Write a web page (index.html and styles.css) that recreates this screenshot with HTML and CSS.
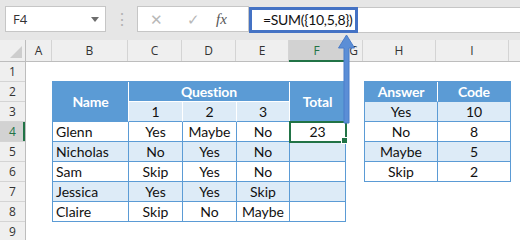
FILE: index.html
```html
<!DOCTYPE html>
<html lang="en">
<head>
    <meta charset="UTF-8">
    <title>SUM array constant</title>
    <link rel="stylesheet" href="styles.css">
</head>
<body>
    <div class="app">
        <div class="toolbar">
            <div class="namebox">F4<span class="caret"></span></div>
            <div class="grip">&#8942;</div>
            <div class="fx-buttons">
                <span class="btn">&#10005;</span>
                <span class="btn">&#10003;</span>
                <span class="fx">fx</span>
            </div>
            <div class="formula">
                <div class="formula-text">=SUM({10,5,8})</div>
            </div>
        </div>

        <div class="sheet">
            <div class="corner"><span class="tri"></span></div>
            <div class="col-heads">
                <div class="ch w-a">A</div>
                <div class="ch w-b">B</div>
                <div class="ch w-c">C</div>
                <div class="ch w-d">D</div>
                <div class="ch w-e">E</div>
                <div class="ch w-f sel">F</div>
                <div class="ch w-g">G</div>
                <div class="ch w-h">H</div>
                <div class="ch w-i">I</div>
                <div class="ch rest"></div>
            </div>
            <div class="row-heads">
                <div class="rh">1</div>
                <div class="rh">2</div>
                <div class="rh">3</div>
                <div class="rh sel">4</div>
                <div class="rh">5</div>
                <div class="rh">6</div>
                <div class="rh">7</div>
                <div class="rh">8</div>
                <div class="rh">9</div>
            </div>
            <div class="cells">
                <table class="tbl survey">
                    <colgroup>
                        <col class="w-b"><col class="w-c"><col class="w-d"><col class="w-e"><col class="w-f">
                    </colgroup>
                    <tr>
                        <td class="hd name-hd" rowspan="2">Name</td>
                        <td class="hd q-hd" colspan="3">Question</td>
                        <td class="hd total-hd" rowspan="2">Total</td>
                    </tr>
                    <tr class="sub">
                        <td>1</td><td>2</td><td>3</td>
                    </tr>
                    <tr>
                        <td class="nm">Glenn</td><td>Yes</td><td>Maybe</td><td>No</td><td class="active">23</td>
                    </tr>
                    <tr class="band">
                        <td class="nm">Nicholas</td><td>No</td><td>Yes</td><td>No</td><td></td>
                    </tr>
                    <tr>
                        <td class="nm">Sam</td><td>Skip</td><td>Yes</td><td>No</td><td></td>
                    </tr>
                    <tr class="band">
                        <td class="nm">Jessica</td><td>Yes</td><td>Yes</td><td>Skip</td><td></td>
                    </tr>
                    <tr>
                        <td class="nm">Claire</td><td>Skip</td><td>No</td><td>Maybe</td><td></td>
                    </tr>
                </table>

                <table class="tbl codes">
                    <colgroup>
                        <col class="w-h"><col class="w-i">
                    </colgroup>
                    <tr>
                        <td class="hd">Answer</td><td class="hd last">Code</td>
                    </tr>
                    <tr class="band"><td>Yes</td><td>10</td></tr>
                    <tr><td>No</td><td>8</td></tr>
                    <tr class="band"><td>Maybe</td><td>5</td></tr>
                    <tr><td>Skip</td><td>2</td></tr>
                </table>
            </div>
        </div>

        <svg class="arrow" width="18" height="92" viewBox="0 0 18 92">
            <path d="M8.5 0 L16.5 13 L11 13 L11 88 L6 88 L6 13 L0.5 13 Z" fill="#5b8ed6" stroke="#4a7cc9" stroke-width="1"/>
        </svg>
    </div>
</body>
</html>
```

FILE: styles.css
```css
body {
    margin: 0;
    background-color: #ffffff;
}
.app {
    position: relative;
    width: 520px;
    height: 240px;
    overflow: hidden;
    font-family: 'Lato', 'Liberation Sans', sans-serif;
}

/* formula bar */
.toolbar {
    height: 40px;
    background-color: #e6e6e6;
    display: flex;
    align-items: flex-start;
    padding-top: 6px;
    box-sizing: border-box;
}
.namebox {
    width: 101px;
    height: 26px;
    margin-left: 5px;
    background-color: #fff;
    border: 1px solid #c6c6c6;
    box-sizing: border-box;
    display: flex;
    align-items: center;
    padding-left: 7px;
    font-family: 'Open Sans', sans-serif;
    font-size: 13px;
    color: #333;
    position: relative;
}
.caret {
    position: absolute;
    right: 6px;
    top: 10px;
    border-left: 4px solid transparent;
    border-right: 4px solid transparent;
    border-top: 5px solid #6d6d6d;
}
.grip {
    width: 31px;
    text-align: center;
    color: #b3b3b3;
    font-size: 16px;
    line-height: 26px;
}
.fx-buttons {
    width: 112px;
    height: 26px;
    background-color: #fff;
    border: 1px solid #c6c6c6;
    box-sizing: border-box;
    display: flex;
    align-items: center;
}
.btn {
    width: 37px;
    text-align: center;
    color: #b8b8b8;
    font-size: 15px;
}
.fx {
    margin-left: 4px;
    font-family: 'Liberation Serif', serif;
    font-style: italic;
    font-size: 15px;
    color: #555;
}
.formula {
    flex: 1;
    height: 26px;
    background-color: #fff;
    border-top: 1px solid #c6c6c6;
    border-bottom: 1px solid #c6c6c6;
    box-sizing: border-box;
    margin-top: 1px;
    position: relative;
}
.formula-text {
    position: absolute;
    left: 0;
    top: -1px;
    width: 109px;
    height: 26px;
    border: 3px solid #4472c4;
    box-sizing: border-box;
    padding-left: 11px;
    font-size: 14px;
    line-height: 20px;
    letter-spacing: -0.3px;
    color: #111;
}

/* grid */
.sheet {
    display: grid;
    grid-template-columns: 26px 1fr;
    grid-template-rows: 22px 1fr;
    height: 200px;
}
.corner {
    background-color: #efefef;
    border-right: 1px solid #bdbdbd;
    border-bottom: 1px solid #bdbdbd;
    box-sizing: border-box;
    position: relative;
}
.tri {
    position: absolute;
    right: 3px;
    bottom: 3px;
    border-left: 12px solid transparent;
    border-bottom: 12px solid #cdcdcd;
}
.col-heads {
    display: flex;
    background-color: #efefef;
    border-bottom: 1px solid #bdbdbd;
    box-sizing: border-box;
}
.ch {
    flex: none;
    border-right: 1px solid #d4d4d4;
    box-sizing: border-box;
    text-align: center;
    font-family: 'Open Sans', sans-serif;
    font-size: 12px;
    line-height: 21px;
    color: #333;
}
.ch.rest {
    flex: 1;
    border-right: none;
}
.ch.sel {
    background-color: #d2d2d2;
    color: #217346;
    border-bottom: 2px solid #217346;
    margin-bottom: -1px;
}
.w-a { width: 26px; }
.w-b { width: 76px; }
.w-c { width: 54px; }
.w-d { width: 54px; }
.w-e { width: 53px; }
.w-f { width: 56px; }
.w-g { width: 18px; }
.w-h { width: 73px; }
.w-i { width: 73px; }

.row-heads {
    background-color: #efefef;
    border-right: 1px solid #bdbdbd;
}
.rh {
    height: 20px;
    border-bottom: 1px solid #d4d4d4;
    box-sizing: border-box;
    text-align: center;
    font-family: 'Open Sans', sans-serif;
    font-size: 12px;
    line-height: 19px;
    color: #333;
}
.rh.sel {
    background-color: #d2d2d2;
    color: #217346;
    box-shadow: inset -2px 0 0 #217346;
}

/* tables */
.cells {
    display: flex;
    align-items: flex-start;
    padding-top: 19px;
    padding-left: 26px;
    gap: 18px;
}
.tbl {
    border-collapse: separate;
    border-spacing: 0;
    table-layout: fixed;
    border-top: 1px solid #5b9bd5;
    border-left: 1px solid #5b9bd5;
    font-size: 14px;
    color: #111;
}
.tbl tr {
    height: 20px;
}
.tbl td {
    padding: 0;
    border-right: 1px solid #5b9bd5;
    border-bottom: 1px solid #5b9bd5;
    text-align: center;
    line-height: 18px;
    white-space: nowrap;
}
.tbl .hd {
    background-color: #5b9bd5;
    color: #fff;
    font-weight: bold;
    letter-spacing: -0.2px;
    border-right-color: #fff;
}
.tbl .hd.total-hd,
.tbl .hd.last {
    border-right-color: #5b9bd5;
}
.tbl .q-hd {
    border-bottom-color: #fff;
}
.tbl .sub td {
    background-color: #ddebf7;
    border-right-color: #fff;
}
.tbl .band td {
    background-color: #ddebf7;
}
.tbl td.nm {
    text-align: left;
    padding-left: 3px;
}
.tbl td.active {
    position: relative;
    outline: 2px solid #217346;
    outline-offset: -1px;
}
.tbl td.active::after {
    content: "";
    position: absolute;
    right: -3px;
    bottom: -3px;
    width: 5px;
    height: 5px;
    background-color: #217346;
    border: 1px solid #fff;
}

.arrow {
    position: absolute;
    left: 338px;
    top: 35px;
}
```
